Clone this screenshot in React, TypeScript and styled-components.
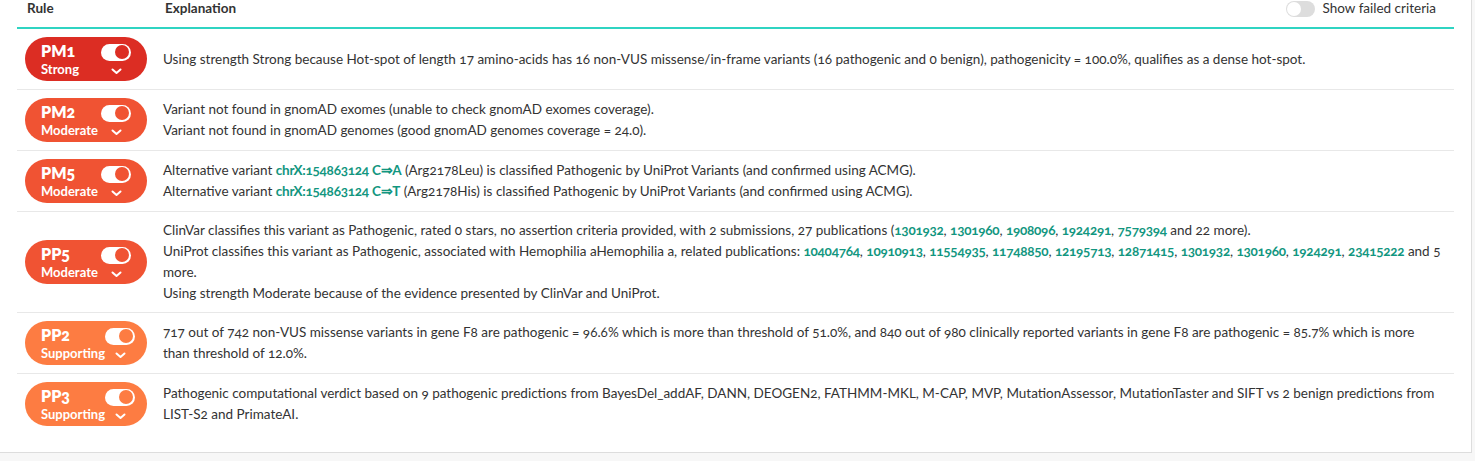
import React from "react";
import styled, { createGlobalStyle } from "styled-components";

const Global = createGlobalStyle`
  html, body { margin: 0; padding: 0; background: #f7f7f7; }
  body { font-family: "Lato", "Open Sans", sans-serif; color: #333; font-variant-numeric: oldstyle-nums; }
  * { box-sizing: border-box; }
`;

const Panel = styled.div`
  width: 1472px;
  height: 453px;
  background: #fff;
  border-right: 1px solid #ddd;
  border-bottom: 1px solid #ddd;
  padding: 0 17px 0 17px;
`;

const Table = styled.div`
  display: grid;
  grid-template-columns: 138px 1fr;
`;

const HeadCell = styled.div`
  height: 29px;
  border-bottom: 2px solid #2fd4c2;
  padding: 0 10px;
  font-size: 13.5px;
  font-weight: 700;
  line-height: 17px;
  color: #333;
  display: flex;
  align-items: flex-start;
  justify-content: space-between;
`;

const FilterToggle = styled.label`
  display: flex;
  align-items: center;
  gap: 8px;
  font-weight: 400;
  font-size: 13.5px;
  color: #333;
  margin-right: 8px;
`;

const GreyTrack = styled.span`
  width: 29px;
  height: 16px;
  border-radius: 8px;
  background: #ddd;
  position: relative;
  &::after {
    content: "";
    position: absolute;
    left: 1px;
    top: 1px;
    width: 14px;
    height: 14px;
    border-radius: 50%;
    background: #fff;
  }
`;

const RuleCell = styled.div<{ $last?: boolean }>`
  padding: 8px 8px;
  border-bottom: ${(p) => (p.$last ? "none" : "1px solid #e8e8e8")};
  display: flex;
  align-items: center;
`;

const TextCell = styled.div<{ $last?: boolean }>`
  padding: 8px 13px 8px 8px;
  border-bottom: ${(p) => (p.$last ? "none" : "1px solid #e8e8e8")};
  display: flex;
  flex-direction: column;
  justify-content: center;
  font-size: 13.5px;
  line-height: 21px;
  color: #333;
`;

const Badge = styled.div<{ $color: string }>`
  width: 122px;
  height: 44px;
  border-radius: 22px;
  background: ${(p) => p.$color};
  color: #fff;
  display: grid;
  grid-template-columns: 1fr auto;
  align-items: center;
  padding: 4px 16px 4px 16px;
`;

const Labels = styled.div`
  display: flex;
  flex-direction: column;
`;

const RuleName = styled.span`
  font-size: 16px;
  font-weight: 800;
  line-height: 20px;
`;

const Strength = styled.span`
  font-size: 13px;
  font-weight: 700;
  line-height: 16px;
`;

const Controls = styled.div`
  display: flex;
  flex-direction: column;
  align-items: center;
  gap: 7px;
`;

const Track = styled.span<{ $color: string }>`
  width: 30px;
  height: 17px;
  border-radius: 9px;
  background: #fff;
  position: relative;
  &::after {
    content: "";
    position: absolute;
    right: 2px;
    top: 1.5px;
    width: 14px;
    height: 14px;
    border-radius: 50%;
    background: ${(p) => p.$color};
  }
`;

const Link = styled.a`
  color: #129680;
  font-weight: 700;
  letter-spacing: -0.25px;
  text-decoration: none;
`;

const Line = styled.div``;

const Chevron = () => (
  <svg width="11" height="7" viewBox="0 0 11 7">
    <path d="M1.5 1.5 L5.5 5 L9.5 1.5" fill="none" stroke="#fff" strokeWidth="2" strokeLinecap="round" strokeLinejoin="round" />
  </svg>
);

const RED = "#dc2d23";
const MOD = "#f05333";
const SUP = "#fd7c42";

const links = (ids: string[]) =>
  ids.map((id, i) => (
    <React.Fragment key={id}>
      <Link>{id}</Link>
      {i < ids.length - 1 ? ", " : ""}
    </React.Fragment>
  ));

type Row = { name: string; strength: string; color: string; lines: React.ReactNode[] };

const rows: Row[] = [
  {
    name: "PM1",
    strength: "Strong",
    color: RED,
    lines: [
      "Using strength Strong because Hot-spot of length 17 amino-acids has 16 non-VUS missense/in-frame variants (16 pathogenic and 0 benign), pathogenicity = 100.0%, qualifies as a dense hot-spot.",
    ],
  },
  {
    name: "PM2",
    strength: "Moderate",
    color: MOD,
    lines: [
      "Variant not found in gnomAD exomes (unable to check gnomAD exomes coverage).",
      "Variant not found in gnomAD genomes (good gnomAD genomes coverage = 24.0).",
    ],
  },
  {
    name: "PM5",
    strength: "Moderate",
    color: MOD,
    lines: [
      <>Alternative variant <Link>chrX:154863124 C⇒A</Link> (Arg2178Leu) is classified Pathogenic by UniProt Variants (and confirmed using ACMG).</>,
      <>Alternative variant <Link>chrX:154863124 C⇒T</Link> (Arg2178His) is classified Pathogenic by UniProt Variants (and confirmed using ACMG).</>,
    ],
  },
  {
    name: "PP5",
    strength: "Moderate",
    color: MOD,
    lines: [
      <>ClinVar classifies this variant as Pathogenic, rated 0 stars, no assertion criteria provided, with 2 submissions, 27 publications ({links(["1301932", "1301960", "1908096", "1924291", "7579394"])} and 22 more).</>,
      <>UniProt classifies this variant as Pathogenic, associated with Hemophilia aHemophilia a, related publications: {links(["10404764", "10910913", "11554935", "11748850", "12195713", "12871415", "1301932", "1301960", "1924291", "23415222"])} and 5 more.</>,
      "Using strength Moderate because of the evidence presented by ClinVar and UniProt.",
    ],
  },
  {
    name: "PP2",
    strength: "Supporting",
    color: SUP,
    lines: [
      "717 out of 742 non-VUS missense variants in gene F8 are pathogenic = 96.6% which is more than threshold of 51.0%, and 840 out of 980 clinically reported variants in gene F8 are pathogenic = 85.7% which is more than threshold of 12.0%.",
    ],
  },
  {
    name: "PP3",
    strength: "Supporting",
    color: SUP,
    lines: [
      "Pathogenic computational verdict based on 9 pathogenic predictions from BayesDel_addAF, DANN, DEOGEN2, FATHMM-MKL, M-CAP, MVP, MutationAssessor, MutationTaster and SIFT vs 2 benign predictions from LIST-S2 and PrimateAI.",
    ],
  },
];

export default function App() {
  return (
    <>
      <Global />
      <Panel>
        <Table>
          <HeadCell>Rule</HeadCell>
          <HeadCell>
            <span>Explanation</span>
            <FilterToggle>
              <GreyTrack />
              Show failed criteria
            </FilterToggle>
          </HeadCell>
          {rows.map((r, i) => {
            const last = i === rows.length - 1;
            return (
              <React.Fragment key={r.name}>
                <RuleCell $last={last}>
                  <Badge $color={r.color}>
                    <Labels>
                      <RuleName>{r.name}</RuleName>
                      <Strength>{r.strength}</Strength>
                    </Labels>
                    <Controls>
                      <Track $color={r.color} />
                      <Chevron />
                    </Controls>
                  </Badge>
                </RuleCell>
                <TextCell $last={last}>
                  {r.lines.map((l, j) => (
                    <Line key={j}>{l}</Line>
                  ))}
                </TextCell>
              </React.Fragment>
            );
          })}
        </Table>
      </Panel>
    </>
  );
}
